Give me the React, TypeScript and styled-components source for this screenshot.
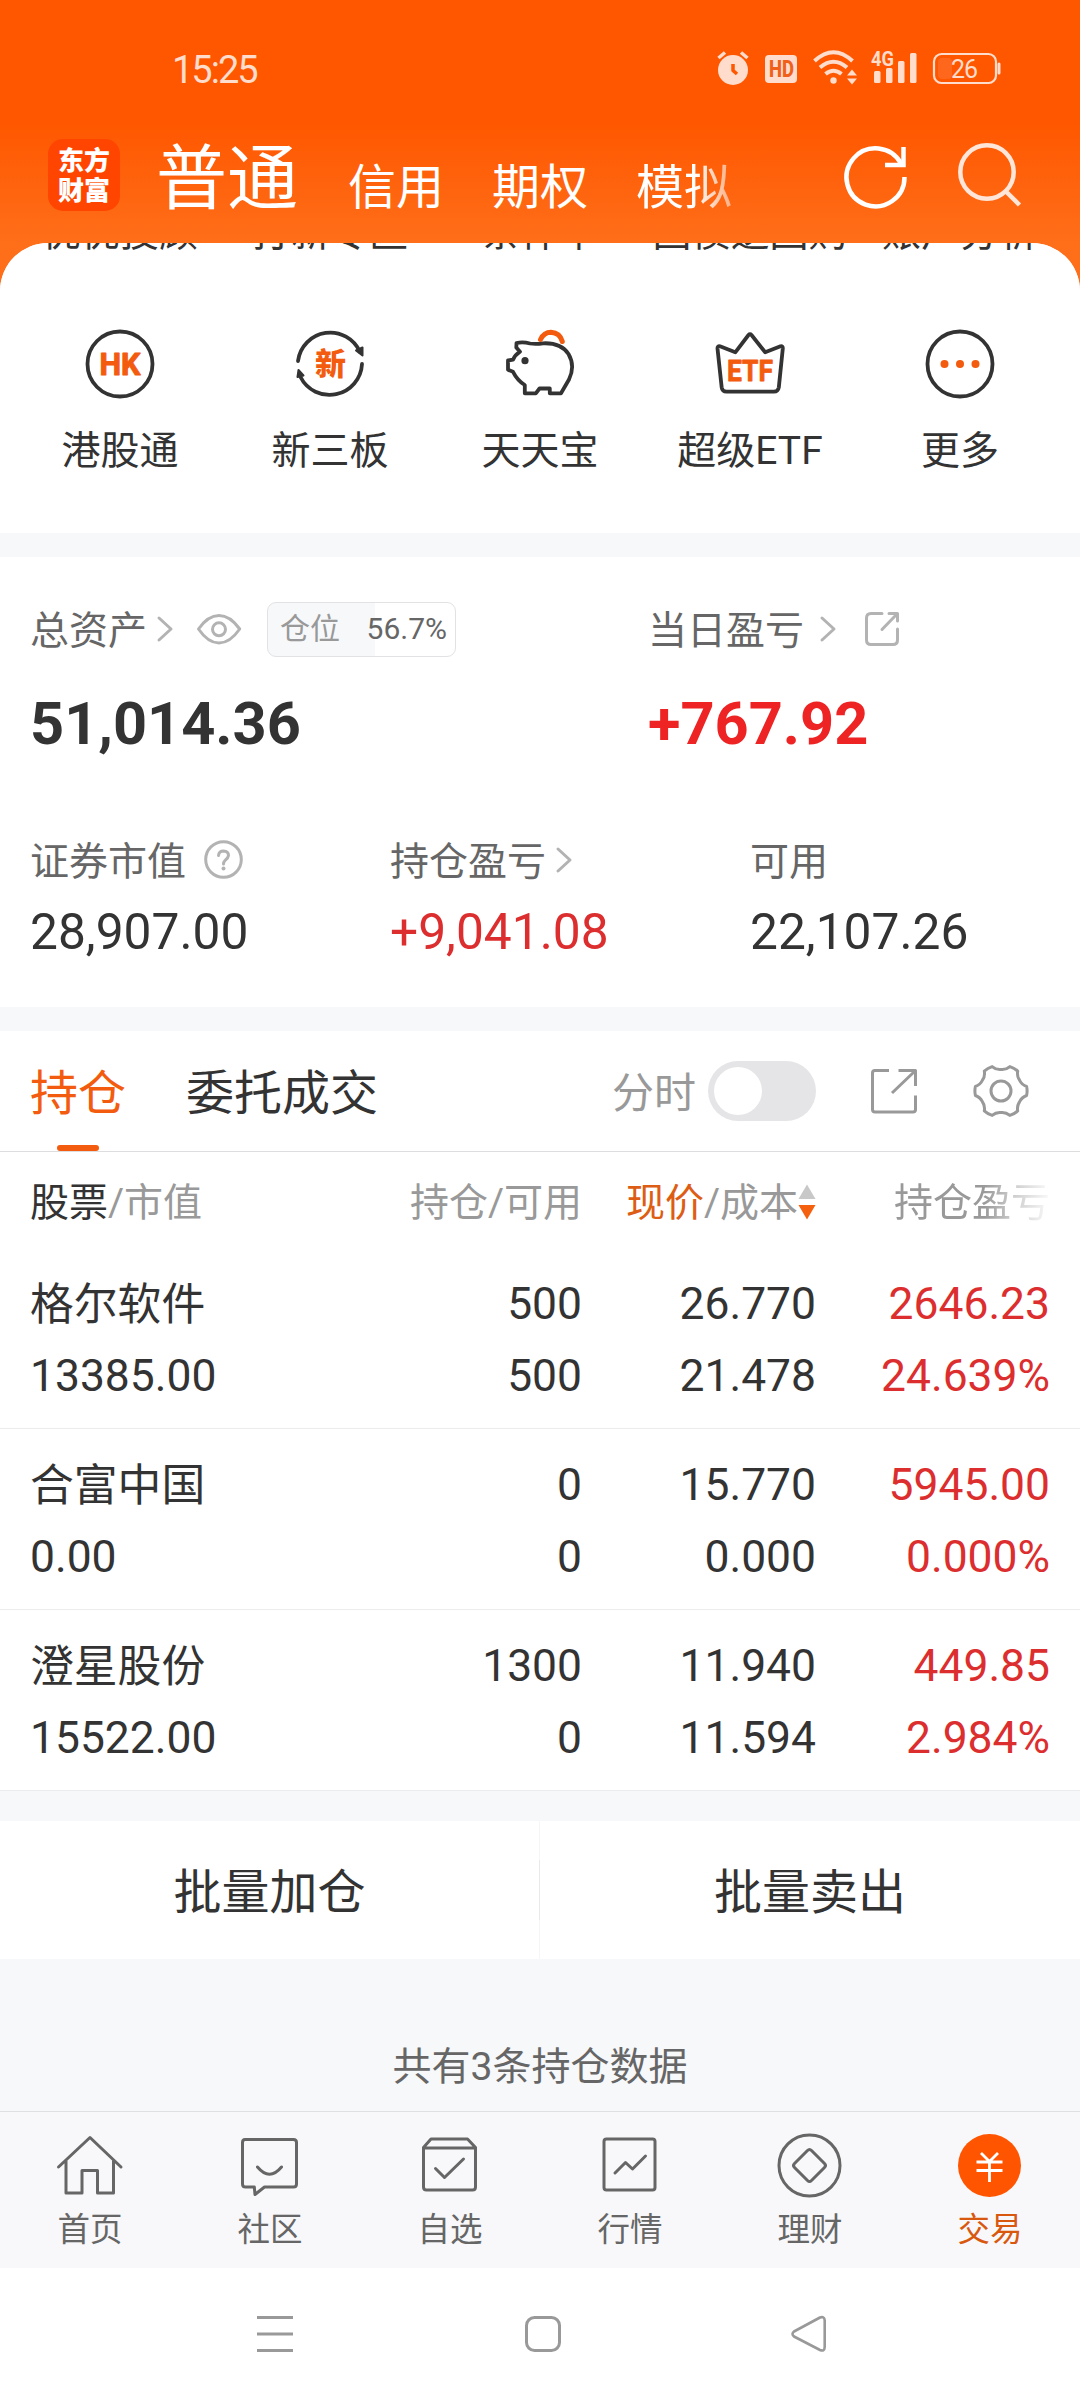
import React from "react";
import styled, { createGlobalStyle, css } from "styled-components";

const ink = "#333333";
const mid = "#666666";
const soft = "#999999";
const pale = "#b3b3b3";
const brand = "#f35b0e";
const gain = "#dc2e2e";
const band = "#f7f8fa";

const GlobalStyle = createGlobalStyle`
  * { box-sizing: border-box; }
  html, body { margin: 0; padding: 0; background: #ffffff; }
  body, svg text { font-family: Roboto, "Noto Sans CJK SC", sans-serif; }
  svg { display: block; flex: none; overflow: visible; }
`;

const Page = styled.div`
  width: 1080px;
  height: 2400px;
  display: flex;
  flex-direction: column;
  overflow: hidden;
  color: ${ink};
  white-space: nowrap;
  background: linear-gradient(#ff5700 0px, #ff5700 122px, #ff6e19 242px, #ff6e19 300px, #fff 300px);
`;

/* status bar */
const StatusBar = styled.div`
  height: 100px;
  padding: 38px 80px 0 172px;
  display: flex;
  align-items: center;
  color: #ffdccb;
`;
const Clock = styled.span`
  flex: 1;
  padding-top: 2px;
  font-size: 38px;
  line-height: 40px;
  letter-spacing: -2px;
`;
const StatusIcons = styled.div`
  display: flex;
  align-items: center;
  gap: 15px;
`;

/* title bar */
const TitleBar = styled.div`
  height: 143px;
  flex: none;
  padding: 39px 56px 0 48px;
  display: flex;
  align-items: flex-start;
  color: #fff;
`;
const Logo = styled.div`
  width: 72px;
  height: 72px;
  margin-right: 36px;
  padding-top: 7px;
  border-radius: 15px;
  background: #ff4500;
  text-align: center;
  font-size: 26px;
  font-weight: 900;
  line-height: 30px;
`;
const Modes = styled.div`
  flex: 1;
  display: flex;
  align-items: flex-start;
  gap: 48px;
`;
const Mode = styled.span<{ $large?: boolean; $fading?: boolean }>`
  font-size: ${(p) => (p.$large ? 71 : 48)}px;
  line-height: 1;
  margin: ${(p) => (p.$large ? "4px 2px 0 0" : "25px 0 0")};
  ${(p) =>
    p.$fading &&
    css`
      mask-image: linear-gradient(90deg, #000 60%, rgba(0, 0, 0, 0.5) 98%);
    `}
`;
const TitleActions = styled.div`
  display: flex;
  gap: 40px;
`;

/* scrolling body */
const Body = styled.main`
  flex: none;
  height: 1868px;
  overflow: hidden;
  border-radius: 48px 48px 0 0;
  background: ${band};
  display: flex;
  flex-direction: column;
`;
const Panel = styled.section<{ $height: number; $after?: number; $top?: number }>`
  height: ${(p) => p.$height}px;
  flex: none;
  margin-bottom: ${(p) => p.$after ?? 0}px;
  padding-top: ${(p) => p.$top ?? 0}px;
  background: #fff;
`;

const FiveGrid = styled.div<{ $clipped?: boolean }>`
  display: grid;
  grid-template-columns: repeat(5, 210px);
  justify-content: center;
  justify-items: center;
  font-size: 39px;
  line-height: 40px;
  margin-top: ${(p) => (p.$clipped ? -30 : 75)}px;
`;
const Shortcut = styled.div`
  display: flex;
  flex-direction: column;
  align-items: center;
  gap: 31px;
`;

/* assets */
const AssetGrid = styled.div<{ $cols: string }>`
  display: grid;
  grid-template-columns: ${(p) => p.$cols};
  padding: 0 30px;
  & + & {
    margin-top: 88px;
  }
`;
const LabelLine = styled.div<{ $tall?: boolean }>`
  display: flex;
  align-items: center;
  height: ${(p) => (p.$tall ? 54 : 40)}px;
  font-size: 39px;
  line-height: 40px;
  color: ${mid};
`;
const LabelText = styled.span<{ $gap?: number; $drop?: number }>`
  margin-right: ${(p) => p.$gap ?? 0}px;
  padding-top: ${(p) => p.$drop ?? 0}px;
`;
const BigValue = styled.div<{ $gain?: boolean }>`
  margin-top: 38px;
  font-size: 59.5px;
  line-height: 60px;
  font-weight: 700;
  color: ${(p) => (p.$gain ? "#ee2424" : ink)};
`;
const SubValue = styled.div<{ $gain?: boolean }>`
  margin-top: 25px;
  font-size: 49.7px;
  line-height: 50px;
  color: ${(p) => (p.$gain ? gain : ink)};
`;
const PositionBadge = styled.div`
  width: 189px;
  height: 55px;
  margin-left: 26px;
  padding: 0 8px 0 12px;
  display: flex;
  align-items: center;
  justify-content: space-between;
  border: 1px solid #e2e2e4;
  border-radius: 9px;
  background: linear-gradient(90deg, ${band} 57%, #fff 57%);
  font-size: 30px;
  color: ${mid};
`;
const BadgeName = styled.span`
  color: ${soft};
`;
const Gap = styled.span<{ $w: number }>`
  width: ${(p) => p.$w}px;
`;

/* holdings */
const TabLine = styled.div`
  height: 121px;
  padding: 0 52px 0 30px;
  display: flex;
  align-items: center;
  border-bottom: 1px solid #dddddf;
`;
const Tab = styled.div<{ $active?: boolean }>`
  height: 120px;
  padding-top: 39px;
  margin-right: 60px;
  display: flex;
  flex-direction: column;
  align-items: center;
  justify-content: space-between;
  font-size: 48px;
  line-height: 48px;
  color: ${(p) => (p.$active ? brand : ink)};
  &::after {
    content: "";
    width: 42px;
    height: 6px;
    border-radius: 3px;
    background: ${(p) => (p.$active ? brand : "transparent")};
  }
`;
const TabTools = styled.div`
  margin-left: auto;
  display: flex;
  align-items: center;
  font-size: 42px;
  line-height: 42px;
  color: ${soft};
`;
const SwitchLabel = styled.span`
  padding-top: 5px;
`;
const Switch = styled.span`
  width: 108px;
  height: 60px;
  margin: 0 54px 0 12px;
  padding: 6px;
  border-radius: 30px;
  background: #e5e5e7;
  &::before {
    content: "";
    display: block;
    width: 48px;
    height: 48px;
    border-radius: 50%;
    background: #fff;
  }
`;
const Columns = styled.div`
  display: grid;
  grid-template-columns: 252px 300px 234px 234px;
  padding: 0 30px;
`;
const HeadRow = styled(Columns)`
  height: 96px;
  align-items: center;
  padding-top: 5px;
  font-size: 39px;
  line-height: 40px;
  color: ${soft};
`;
const Head = styled.div<{ $right?: boolean }>`
  display: flex;
  align-items: center;
  justify-content: ${(p) => (p.$right ? "flex-end" : "flex-start")};
`;
const Accent = styled.span<{ $color: string }>`
  color: ${(p) => p.$color};
`;
const FadingHead = styled.span`
  mask-image: linear-gradient(90deg, #000 58%, rgba(0, 0, 0, 0.5) 76%, rgba(0, 0, 0, 0.05) 100%);
`;
const StockRow = styled(Columns)`
  height: 181px;
  padding-top: 20px;
  border-bottom: 1px solid #ebecee;
  font-size: 44.4px;
  line-height: 72px;
`;
const StockName = styled.span`
  height: 72px;
  padding-top: 1px;
  font-size: 43.8px;
`;
const Pair = styled.div<{ $right?: boolean; $gain?: boolean }>`
  display: flex;
  flex-direction: column;
  text-align: ${(p) => (p.$right ? "right" : "left")};
  color: ${(p) => (p.$gain ? gain : ink)};
`;
const BatchBar = styled.div`
  height: 138px;
  margin-top: 30px;
  display: grid;
  grid-template-columns: 539px 1px 540px;
  align-items: center;
  background: #fff;
`;
const BatchButton = styled.button`
  border: 0;
  padding: 5px 0 0;
  background: none;
  color: ${ink};
  font: 48px/48px Roboto, "Noto Sans CJK SC", sans-serif;
  text-align: center;
`;
const BatchRule = styled.span`
  height: 138px;
  background: linear-gradient(#f5f6f8 39px, #e9e9eb 39px, #e9e9eb 99px, #f5f6f8 99px);
`;
const Summary = styled.div`
  margin-top: 88px;
  text-align: center;
  font-size: 39px;
  line-height: 40px;
  color: ${mid};
`;

/* bottom bars */
const TabBar = styled.nav`
  height: 157px;
  flex: none;
  padding-top: 17px;
  display: grid;
  grid-template-columns: repeat(6, 1fr);
  border-top: 1px solid #dfe0e2;
  background: #f8f8fa;
`;
const TabItem = styled.div<{ $active?: boolean }>`
  display: flex;
  flex-direction: column;
  align-items: center;
  gap: 13px;
  font-size: 32.5px;
  line-height: 33px;
  color: ${(p) => (p.$active ? "#d9580f" : mid)};
`;
const SystemNav = styled.div`
  flex: 1;
  padding: 46px 252px 0 255px;
  display: flex;
  justify-content: space-between;
  align-items: flex-start;
  background: #fff;
`;

const Svg = ({
  box,
  children,
  color = "currentColor",
  width = 3,
}: {
  box: string;
  children: React.ReactNode;
  color?: string;
  width?: number;
}) => {
  const [, , w, h] = box.split(" ");
  return (
    <svg width={w} height={h} viewBox={box} fill="none" stroke={color} strokeWidth={width} strokeLinecap="round" strokeLinejoin="round">
      {children}
    </svg>
  );
};

const Chevron = () => (
  <Svg box="0 0 16 26" color={pale}>
    <path d="M2 2 L14 13 L2 24" />
  </Svg>
);

const gearPath = (() => {
  const at = (deg: number, r: number) => {
    const a = (deg * Math.PI) / 180;
    return `${(r * Math.cos(a)).toFixed(2)} ${(r * Math.sin(a)).toFixed(2)}`;
  };
  let d = `M${at(-10, 26)}`;
  for (let a = 0; a < 360; a += 60) {
    d += ` Q${at(a, 26.6)} ${at(a + 10, 26)} Q${at(a + 17, 21.5)} ${at(a + 30, 21.5)} Q${at(a + 43, 21.5)} ${at(a + 50, 26)}`;
  }
  return d + "Z";
})();

const StatusGlyphs = () => (
  <StatusIcons>
    <Svg box="715 50 34 38">
      <circle cx="733" cy="70" r="15" fill="currentColor" stroke="none" />
      <path d="M718.5 58 L725 52.5 M747.5 58 L741 52.5" strokeWidth="3.5" strokeLinecap="butt" />
      <path d="M733 64 V70.5 L737 74" stroke="#ff5700" strokeWidth="3.5" strokeLinecap="butt" />
    </Svg>
    <Svg box="764 50 32 38">
      <rect x="765" y="55" width="32" height="28" rx="4" fill="currentColor" stroke="none" />
      <text x="769" y="77" fontSize="23" fontWeight="800" fill="#f0601a" stroke="none" textLength="25" lengthAdjust="spacingAndGlyphs">HD</text>
    </Svg>
    <Svg box="811 50 45 38" width={4}>
      <g strokeLinecap="butt">
        <path d="M814.5 61 Q833.5 43.5 852.5 61" />
        <path d="M820 67.5 Q833.5 56 847 67.5" />
        <path d="M825.5 74 Q833.5 67.5 841.5 74" />
      </g>
      <circle cx="833.5" cy="80.5" r="3.2" fill="currentColor" stroke="none" />
      <path d="M847 75.5 L852 69.5 L857 75.5Z M847 78.500 L852 84.500 L857 78.500Z" fill="currentColor" stroke="none" />
    </Svg>
    <Svg box="871 50 46 38">
      <text x="871" y="66" fontSize="20.5" fontWeight="700" fill="currentColor" stroke="none" textLength="23" lengthAdjust="spacingAndGlyphs">4G</text>
      <g fill="currentColor" stroke="none">
        <rect x="874" y="71" width="6.5" height="12" rx="1.5" />
        <rect x="886" y="68" width="6.5" height="15" rx="1.5" />
        <rect x="898" y="61" width="6.5" height="22" rx="1.5" />
        <rect x="910" y="53" width="6.5" height="30" rx="1.5" />
      </g>
    </Svg>
    <Svg box="932 50 68 38" width={2.2}>
      <rect x="934" y="54" width="62" height="29" rx="7.5" />
      <rect x="938" y="58" width="14" height="21" rx="4" fill="#ff681c" stroke="none" />
      <path d="M999 64 V73" strokeWidth="3" />
      <text x="951" y="78" fontSize="25" fill="currentColor" stroke="none" textLength="27">26</text>
    </Svg>
  </StatusIcons>
);

const shortcuts = [
  {
    label: "港股通",
    icon: (
      <Svg box="84 328 72 72" color={ink} width={3.8}>
        <circle cx="120" cy="364" r="32.5" />
        <text x="99.5" y="375" fontSize="31" fontWeight="700" fill={brand} stroke={brand} strokeWidth="1" textLength="41" lengthAdjust="spacingAndGlyphs">HK</text>
      </Svg>
    ),
  },
  {
    label: "新三板",
    icon: (
      <Svg box="294 328 72 72" color={ink} width={3.8}>
        <path d="M298 361 A32.5 32.5 0 0 1 360 352 M362 364 A32.5 32.5 0 0 1 300.5 377" />
        <path d="M362.5 347.5 V355.5 L356 350.5Z M297.5 377 L298.5 370 L303.5 375.5Z" fill={ink} strokeWidth="2" />
        <text x="315" y="375" fontSize="31" fontWeight="900" fill={brand} stroke="none">新</text>
      </Svg>
    ),
  },
  {
    label: "天天宝",
    icon: (
      <Svg box="504 328 72 72" color={ink} width={3.8}>
        <path d="M516.5 343 Q523 341.5 530 343.5 Q536 344.5 543 343.3 Q561 342.5 568.5 354 Q575.5 366 569 379.5 L561 393.3 H549.8 V388.5 H539.5 L535.8 393.3 H524.8 V385 Q517.5 380.5 513 371.8 L508 369.8 V360.5 L513 359.7 Q515 355 520 351.7 L516.3 347.5Z" />
        <circle cx="525" cy="360.7" r="3.6" fill={ink} stroke="none" />
        <path d="M540.5 339.5 Q544 332.3 551 332.3 Q560 333 562.3 341.5" stroke={brand} strokeWidth="5" />
      </Svg>
    ),
  },
  {
    label: "超级ETF",
    icon: (
      <Svg box="714 328 72 72" color={ink} width={3.8}>
        <path d="M735.3 352.3 L748.5 335 Q750 333.3 751.5 335 L765.2 352.3 L780.5 346.3 Q783 345.8 782.8 348.5 L778.8 387.5 Q778 391.7 774 391.7 H726.5 Q722.3 391.7 721.7 387.5 L717.5 348.5 Q717.3 345.8 720 346.3Z" />
        <text x="727" y="380.5" fontSize="30" fontWeight="700" fill={brand} stroke={brand} strokeWidth="0.8" textLength="46" lengthAdjust="spacingAndGlyphs">ETF</text>
      </Svg>
    ),
  },
  {
    label: "更多",
    icon: (
      <Svg box="924 328 72 72" color={ink} width={3.8}>
        <circle cx="960" cy="364" r="32.5" />
        <g fill={brand} stroke="none">
          <circle cx="944.5" cy="364" r="4" />
          <circle cx="960" cy="364" r="4" />
          <circle cx="975.5" cy="364" r="4" />
        </g>
      </Svg>
    ),
  },
];

const stocks = [
  { name: "格尔软件", value: "13385.00", held: "500", usable: "500", price: "26.770", cost: "21.478", profit: "2646.23", rate: "24.639%" },
  { name: "合富中国", value: "0.00", held: "0", usable: "0", price: "15.770", cost: "0.000", profit: "5945.00", rate: "0.000%" },
  { name: "澄星股份", value: "15522.00", held: "1300", usable: "0", price: "11.940", cost: "11.594", profit: "449.85", rate: "2.984%" },
];

const tabs = [
  {
    label: "首页",
    icon: (
      <Svg box="54 2129 72 72" color={mid}>
        <path d="M58.5 2167 L90 2137.5 L121 2167 M66 2161 V2193 H82 V2170.5 H97.5 V2193 H113.5 V2161" />
      </Svg>
    ),
  },
  {
    label: "社区",
    icon: (
      <Svg box="234 2129 72 72" color={mid}>
        <path d="M245 2139.5 H293.5 Q296.5 2139.5 296.5 2142.5 V2184 Q296.5 2187 293.5 2187 H264.5 L255 2194.5 L254.3 2187 H245.5 Q242.5 2187 242.5 2184 V2142.5 Q242.5 2139.5 245 2139.5Z M257.5 2167 Q269.5 2181.5 281.5 2167" />
      </Svg>
    ),
  },
  {
    label: "自选",
    icon: (
      <Svg box="414 2129 72 72" color={mid}>
        <path d="M423.5 2147.5 L431 2139 H467.5 L475.5 2147.5 V2187 Q475.5 2190 472.5 2190 H426.5 Q423.5 2190 423.5 2187Z M423.5 2148 H475.5 M435.5 2168.5 L444.5 2177.5 L463.5 2159" />
      </Svg>
    ),
  },
  {
    label: "行情",
    icon: (
      <Svg box="594 2129 72 72" color={mid}>
        <rect x="604" y="2139" width="51" height="51" rx="2.5" />
        <path d="M615 2173 L625.5 2162.5 L632.5 2169 L645.5 2156" />
      </Svg>
    ),
  },
  {
    label: "理财",
    icon: (
      <Svg box="774 2129 72 72" color={mid}>
        <circle cx="809.5" cy="2165.5" r="30.5" />
        <path d="M807.5 2150.5 Q809.5 2148.5 811.5 2150.5 L824.5 2163.5 Q826.5 2165.5 824.5 2167.5 L811.5 2180.5 Q809.5 2182.5 807.5 2180.5 L794.5 2167.5 Q792.5 2165.5 794.5 2163.5Z" />
      </Svg>
    ),
  },
  {
    label: "交易",
    active: true,
    icon: (
      <Svg box="954 2129 72 72" color="#fff" width={2.8}>
        <circle cx="989.5" cy="2165.5" r="31.5" fill="#ff5500" stroke="none" />
        <path d="M981 2153 L989.5 2161.5 L998 2153 M989.5 2161.5 V2182 M976.5 2162 H1002.5 M976.5 2170.5 H1002.5" strokeLinecap="butt" />
      </Svg>
    ),
  },
];

export default function App() {
  return (
    <>
      <GlobalStyle />
      <Page>
        <StatusBar>
          <Clock>15:25</Clock>
          <StatusGlyphs />
        </StatusBar>
        <TitleBar>
          <Logo>
            东方
            <br />
            财富
          </Logo>
          <Modes>
            <Mode $large>普通</Mode>
            <Mode>信用</Mode>
            <Mode>期权</Mode>
            <Mode $fading>模拟</Mode>
          </Modes>
          <TitleActions>
            <Svg box="840 139 72 72" width={4.5}>
              <g strokeLinecap="butt" strokeLinejoin="miter">
                <path d="M904.5 177 A29 29 0 1 1 901 163.5" />
                <path d="M903.5 147 V165 H885" />
              </g>
            </Svg>
            <Svg box="952 139 72 72" width={4.5} color="#ffe6d8">
              <circle cx="987" cy="172" r="26.7" />
              <path d="M1005.5 191 L1019.5 205" strokeLinecap="butt" />
            </Svg>
          </TitleActions>
        </TitleBar>

        <Body>
          <Panel $height={290} $after={24}>
            <FiveGrid $clipped>
              <span>优优投顾</span>
              <span>打新专区</span>
              <span>条件单</span>
              <span>国债逆回购</span>
              <span>账户分析</span>
            </FiveGrid>
            <FiveGrid>
              {shortcuts.map((s) => (
                <Shortcut key={s.label}>
                  {s.icon}
                  <span>{s.label}</span>
                </Shortcut>
              ))}
            </FiveGrid>
          </Panel>

          <Panel $height={450} $after={24} $top={45}>
            <AssetGrid $cols="618px 1fr">
              <div>
                <LabelLine $tall>
                  <LabelText $gap={10} $drop={4}>总资产</LabelText>
                  <Chevron />
                  <Gap $w={24} />
                  <Svg box="197 612 44 31" color={pale}>
                    <path d="M198.5 627 Q208 613.5 219 613.5 Q230 613.5 239.7 627 Q230 641 219 641 Q208 641 198.5 627Z" />
                    <circle cx="219" cy="627.3" r="6.5" />
                  </Svg>
                  <PositionBadge>
                    <BadgeName>仓位</BadgeName>
                    <span>56.7%</span>
                  </PositionBadge>
                </LabelLine>
                <BigValue>51,014.36</BigValue>
              </div>
              <div>
                <LabelLine $tall>
                  <LabelText $gap={16} $drop={4}>当日盈亏</LabelText>
                  <Chevron />
                  <Gap $w={29} />
                  <Svg box="865 612 34 34" color={pale}>
                    <path d="M882 613.5 H871 Q866.5 613.5 866.5 618 V640 Q866.5 644.5 871 644.5 H893 Q897.5 644.5 897.5 640 V629 M889 613.5 H897.5 V621 M897 614 L882 629.5" />
                  </Svg>
                </LabelLine>
                <BigValue $gain>+767.92</BigValue>
              </div>
            </AssetGrid>
            <AssetGrid $cols="360px 360px 1fr">
              <div>
                <LabelLine>
                  <LabelText $gap={18}>证券市值</LabelText>
                  <Svg box="204 840 40 40" color={pale}>
                    <circle cx="223.5" cy="857.5" r="17.8" />
                    <path d="M218.5 853.5 Q219 849 223.5 849 Q228.5 849.3 228.5 853.5 Q228 856.5 225 858.5 Q223.5 860 223.5 862" />
                    <circle cx="223.5" cy="866.5" r="2" fill={pale} stroke="none" />
                  </Svg>
                </LabelLine>
                <SubValue>28,907.00</SubValue>
              </div>
              <div>
                <LabelLine>
                  <LabelText $gap={10}>持仓盈亏</LabelText>
                  <Svg box="0 2 16 26" color={pale}>
                    <path d="M2 2 L14 13 L2 24" />
                  </Svg>
                </LabelLine>
                <SubValue $gain>+9,041.08</SubValue>
              </div>
              <div>
                <LabelLine>可用</LabelLine>
                <SubValue>22,107.26</SubValue>
              </div>
            </AssetGrid>
          </Panel>

          <Panel $height={760}>
            <TabLine>
              <Tab $active>持仓</Tab>
              <Tab>委托成交</Tab>
              <TabTools>
                <SwitchLabel>分时</SwitchLabel>
                <Switch />
                <Svg box="870 1067 48 48" color={soft}>
                  <path d="M889 1070.5 H875 Q872.5 1070.5 872.5 1073 V1109.5 Q872.5 1112 875 1112 H913 Q915.5 1112 915.5 1109.5 V1095.5 M898.5 1070.5 H915.5 V1086 M915 1071 L892 1093" strokeLinecap="butt" />
                </Svg>
                <Gap $w={56} />
                <Svg box="-27 -27 54 54" color={soft}>
                  <path d={gearPath} />
                  <circle r="10" />
                </Svg>
              </TabTools>
            </TabLine>
            <HeadRow>
              <Head>
                <Accent $color={ink}>股票</Accent>/市值
              </Head>
              <Head $right>持仓/可用</Head>
              <Head $right>
                <Accent $color="#dd5d14">现价</Accent>/成本
                <svg width="18" height="36" viewBox="0 1 18 36">
                  <path d="M9 0.5 L17.500 15 H0.500Z" fill="#c8c8c8" />
                  <path d="M9 35.500 L17.500 21 H0.500Z" fill="#f5600f" />
                </svg>
              </Head>
              <Head $right>
                <FadingHead>持仓盈亏</FadingHead>
              </Head>
            </HeadRow>
            {stocks.map((s) => (
              <StockRow key={s.name}>
                <Pair>
                  <StockName>{s.name}</StockName>
                  <span>{s.value}</span>
                </Pair>
                <Pair $right>
                  <span>{s.held}</span>
                  <span>{s.usable}</span>
                </Pair>
                <Pair $right>
                  <span>{s.price}</span>
                  <span>{s.cost}</span>
                </Pair>
                <Pair $right $gain>
                  <span>{s.profit}</span>
                  <span>{s.rate}</span>
                </Pair>
              </StockRow>
            ))}
          </Panel>

          <BatchBar>
            <BatchButton>批量加仓</BatchButton>
            <BatchRule />
            <BatchButton>批量卖出</BatchButton>
          </BatchBar>
          <Summary>共有3条持仓数据</Summary>
        </Body>

        <TabBar>
          {tabs.map((t) => (
            <TabItem key={t.label} $active={t.active}>
              {t.icon}
              <span>{t.label}</span>
            </TabItem>
          ))}
        </TabBar>
        <SystemNav>
          <Svg box="255 2314 40 40" color={soft}>
            <path d="M257 2317.5 H293 M257 2334 H293 M257 2350.5 H293" strokeLinecap="butt" />
          </Svg>
          <Svg box="522 2314 40 40" color={soft}>
            <rect x="526.5" y="2317.5" width="33" height="33" rx="8" />
          </Svg>
          <Svg box="788 2314 40 40" color={soft} width={2.6}>
            <path d="M794 2331.5 L820 2317.5 Q824.5 2316 824.7 2320.5 V2347 Q824.5 2352 820 2350 L794 2336.5 Q791 2334 794 2331.5Z" />
          </Svg>
        </SystemNav>
      </Page>
    </>
  );
}
